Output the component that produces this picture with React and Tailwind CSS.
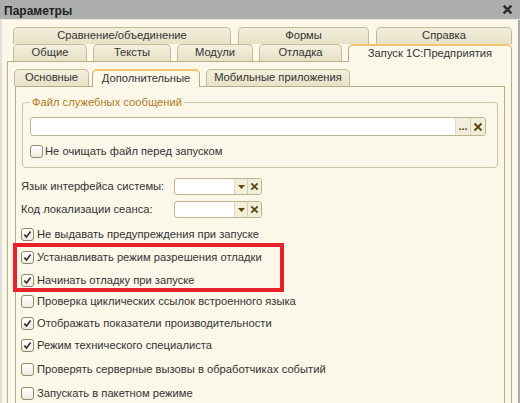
import React from "react";

function XIcon({ size = 9, color = "#5a4810", width = 2 }) {
  return (
    <svg width={size} height={size} viewBox="0 0 10 10">
      <path d="M1.5 1.5 L8.5 8.5 M8.5 1.5 L1.5 8.5" stroke={color} strokeWidth={width} fill="none" />
    </svg>
  );
}

function Check({ checked }) {
  return (
    <span className="w-[13px] h-[13px] shrink-0 rounded-[3px] border border-[#8f8a6e] bg-linear-to-b from-white to-[#efece0] flex items-center justify-center">
      {checked && (
        <svg width="9" height="9" viewBox="0 0 9 9">
          <path d="M1.3 4.6 L3.5 7 L7.6 1.6" stroke="#333" strokeWidth="1.7" fill="none" />
        </svg>
      )}
    </span>
  );
}

function Tab({ label, w, selected }) {
  return (
    <div
      className={`h-[17px] shrink-0 rounded-t-[5px] border border-b-0 flex items-center justify-center leading-none whitespace-nowrap ${
        selected
          ? "bg-[#fbf8ea] border-[#b4ad88] border-t-2 border-t-[#f3c46c] relative z-10 h-[18px] -mb-px"
          : "bg-linear-to-b from-[#f3efdd] to-[#e8e1c6] border-[#c3bc98]"
      }`}
      style={{ width: w }}
    >
      {label}
    </div>
  );
}

function Combo() {
  return (
    <div className="w-[88px] h-[17px] flex border border-[#bdb48e] rounded-[3px] bg-white overflow-hidden">
      <div className="flex-1" />
      <div className="w-[13px] flex items-center justify-center bg-[#f2eedc] border-l border-[#e0dac2]">
        <svg width="7" height="4" viewBox="0 0 7 4">
          <path d="M0 0 H7 L3.5 4 Z" fill="#5a4810" />
        </svg>
      </div>
      <div className="w-[14px] flex items-center justify-center bg-[#f2eedc] border-l border-[#d5ceb0]">
        <XIcon />
      </div>
    </div>
  );
}

const options = [
  { label: "Не выдавать предупреждения при запуске", checked: true, h: "h-[24px]" },
  { label: "Устанавливать режим разрешения отладки", checked: true, h: "h-[23px]" },
  { label: "Начинать отладку при запуске", checked: true, h: "h-[22px]" },
  { label: "Проверка циклических ссылок встроенного языка", checked: false, h: "h-[21px]" },
  { label: "Отображать показатели производительности", checked: true, h: "h-[22px]" },
  { label: "Режим технического специалиста", checked: true, h: "h-[23px]" },
  { label: "Проверять серверные вызовы в обработчиках событий", checked: false, h: "h-[24px]" },
  { label: "Запускать в пакетном режиме", checked: false, h: "h-[24px]" },
];

export default function App() {
  return (
    <div className="w-[520px] h-[403px] overflow-hidden relative bg-[#fbf8ea] font-['Liberation_Sans',Arial,sans-serif] text-[11.2px] text-[#333]">
      {/* Title bar */}
      <div className="h-[20px] bg-[#adadad] border-b border-[#e6e4dc] flex items-center justify-between pl-[4px] pr-[7px]">
        <span className="font-bold text-[12px] text-[#222] pt-[2px]">Параметры</span>
        <XIcon size={11} color="#2b2b2b" width={2.2} />
      </div>

      <div className="h-[383px] border-l-2 border-l-[#e2e0d8] border-r-2 border-r-[#acacac] overflow-hidden">
        {/* Tabs row 1 */}
        <div className="flex gap-[7px] pl-[11px] pt-[7px]">
          <Tab label="Сравнение/объединение" w={218} />
          <Tab label="Формы" w={131} />
          <Tab label="Справка" w={136} />
        </div>
        {/* Tabs row 2 */}
        <div className="flex items-end gap-[6px] pl-[11px]">
          <Tab label="Общие" w={74} />
          <Tab label="Тексты" w={78} />
          <Tab label="Модули" w={76} />
          <Tab label="Отладка" w={83} />
          <Tab label="Запуск 1С:Предприятия" w={164} selected />
        </div>

        {/* Outer panel */}
        <div className="ml-[5px] w-[505px] h-[400px] border border-[#b4ad88] pl-[6px] pt-[7px]">
          {/* Inner tabs */}
          <div className="flex items-end">
            <Tab label="Основные" w={75} />
            <div className="w-[3px]" />
            <Tab label="Дополнительные" w={108} selected />
            <div className="w-[6px]" />
            <Tab label="Мобильные приложения" w={144} />
          </div>

          {/* Inner panel */}
          <div className="ml-px w-[490px] h-[400px] border border-[#b4ad88] pl-[5px]">
            <fieldset className="ml-px mt-[8px] w-[476px] border border-[#cbc5a3] rounded-[4px] pl-[7px] pr-[11px] pt-[8px] pb-[4px]">
              <legend className="px-[2px] text-[#b07a1c] leading-[14px]">Файл служебных сообщений</legend>
              <div className="h-[19px] flex border border-[#bdb48e] rounded-[3px] bg-white overflow-hidden">
                <div className="flex-1" />
                <div className="w-[15px] flex items-end justify-center pb-[3px] bg-[#f2eedc] border-l border-[#e0dac2] text-[#5a4810] leading-none font-bold text-[11px]">
                  ...
                </div>
                <div className="w-[15px] flex items-center justify-center bg-[#f2eedc] border-l border-[#d5ceb0]">
                  <XIcon size={10} />
                </div>
              </div>
              <div className="mt-[4px] h-[23px] flex items-center gap-[2px]">
                <Check />
                <span>Не очищать файл перед запуском</span>
              </div>
            </fieldset>

            <div className="mt-[7px] h-[23px] flex items-center">
              <span className="w-[153px] whitespace-nowrap">Язык интерфейса системы:</span>
              <Combo />
            </div>
            <div className="h-[23px] flex items-center">
              <span className="w-[153px] whitespace-nowrap">Код локализации сеанса:</span>
              <Combo />
            </div>

            <div className="mt-[1px] flex flex-col">
              {options.map((o) => (
                <div key={o.label} className={`${o.h} flex items-center gap-[3px]`}>
                  <Check checked={o.checked} />
                  <span className="whitespace-nowrap">{o.label}</span>
                </div>
              ))}
            </div>
          </div>
        </div>
      </div>

      {/* Red highlight */}
      <div className="absolute left-[13px] top-[243px] w-[271px] h-[49px] border-4 border-[#e8202a]" />
    </div>
  );
}
